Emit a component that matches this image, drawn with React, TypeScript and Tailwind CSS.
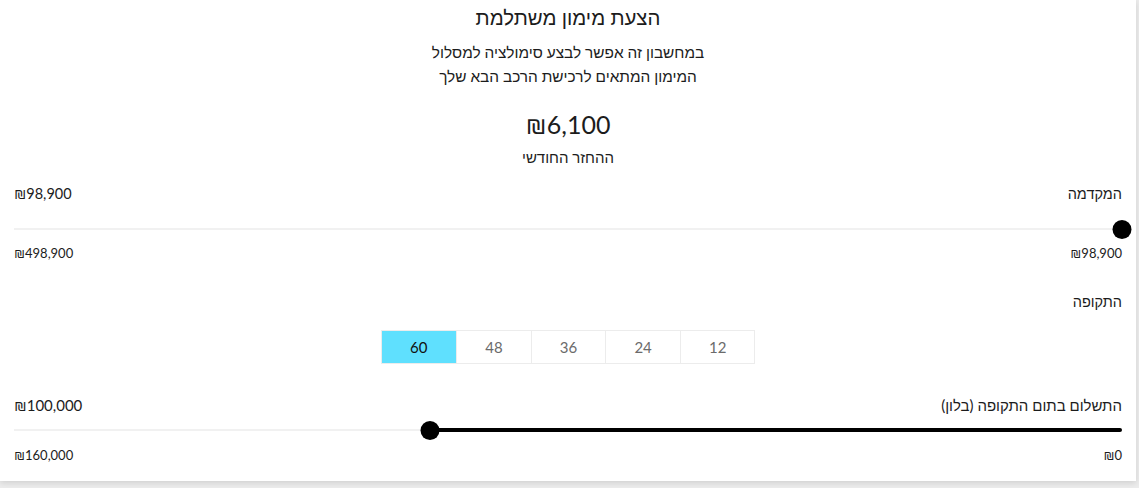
import { useState } from 'react';

const terms = [12, 24, 36, 48, 60];

const fmt = (n: number) => '₪' + n.toLocaleString('en-US');

function Slider({ min, max, value }: { min: number; max: number; value: number }) {
  // rtl: min sits on the right, fill runs from the right edge to the thumb
  const pct = ((value - min) / (max - min)) * 100;
  return (
    <div className="relative h-5 flex items-center">
      <div className="h-[2px] w-full bg-[#f1f1f1]" />
      <div className="absolute right-0 h-[4px] bg-black rounded-full" style={{ width: `${pct}%` }} />
      <div
        className="absolute w-[19px] h-[19px] rounded-full bg-black translate-x-1/2"
        style={{ right: `${pct}%` }}
      />
    </div>
  );
}

export default function App() {
  const [term, setTerm] = useState(60);

  return (
    <div className="min-h-screen bg-[#ececec]" style={{ fontFamily: 'Lato, "Liberation Sans", Arial, sans-serif' }}>
      <div dir="rtl" className="w-[1136px] h-[481px] bg-white shadow-[0_2px_6px_rgba(0,0,0,0.12)] px-[14px] pt-[3px] text-[#1c1c1c]">
        <h1 className="text-center text-[20.4px] leading-[28px]">הצעת מימון משתלמת</h1>
        <p className="mt-[9px] text-center text-[15.4px] leading-[24px]">
          במחשבון זה אפשר לבצע סימולציה למסלול
          <br />
          המימון המתאים לרכישת הרכב הבא שלך
        </p>
        <div dir="ltr" className="mt-[20px] text-center text-[25px] leading-[32px]">{fmt(6100)}</div>
        <div className="mt-[6px] text-center text-[15px] leading-[22px]">ההחזר החודשי</div>

        <div className="mt-[16px] flex justify-between text-[14.5px] leading-[20px]">
          <span>המקדמה</span>
          <span dir="ltr">{fmt(98900)}</span>
        </div>
        <div className="mt-[15px]">
          <Slider min={98900} max={498900} value={98900} />
        </div>
        <div className="mt-[5px] flex justify-between text-[13px] leading-[18px]">
          <span dir="ltr">{fmt(98900)}</span>
          <span dir="ltr">{fmt(498900)}</span>
        </div>

        <div className="mt-[30px] text-[14.5px] leading-[20px]">התקופה</div>
        <div className="mt-[18px] flex justify-center">
          <div className="flex border border-[#ececec]">
            {terms.map((t) => (
              <button
                key={t}
                onClick={() => setTerm(t)}
                className={
                  t === term
                    ? 'w-[74.6px] h-[32px] bg-[#5fe0fe] text-[15px] text-[#111]'
                    : 'w-[74.6px] h-[32px] border-l border-[#ececec] text-[15px] text-[#6b6b6b]'
                }
              >
                {t}
              </button>
            ))}
          </div>
        </div>

        <div className="mt-[31px] flex justify-between text-[15px] leading-[20px]">
          <span>התשלום בתום התקופה (בלון)</span>
          <span dir="ltr">{fmt(100000)}</span>
        </div>
        <div className="mt-[5px]">
          <Slider min={0} max={160000} value={100000} />
        </div>
        <div className="mt-[6px] flex justify-between text-[13px] leading-[18px]">
          <span dir="ltr">{fmt(0)}</span>
          <span dir="ltr">{fmt(160000)}</span>
        </div>
      </div>
    </div>
  );
}
